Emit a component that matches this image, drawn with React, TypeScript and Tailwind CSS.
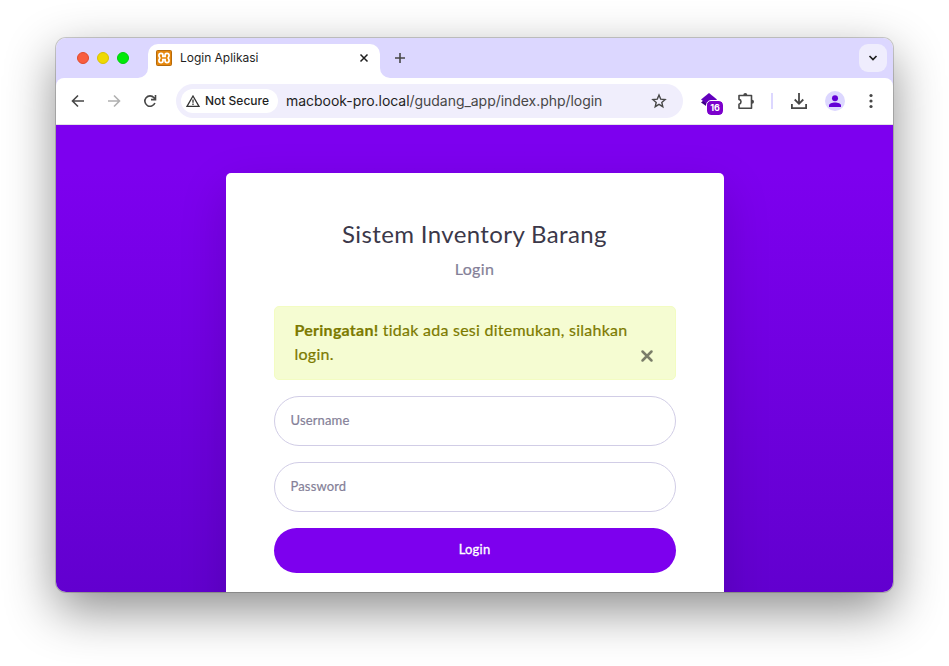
import React from "react";

function TabStrip() {
  return (
    <div className="flex h-10 bg-[#dcd7ff]">
      <div className="flex w-[82px] items-center gap-2 pl-[21px]">
        <span className="size-3 shrink-0 rounded-full border border-[#e04a2c] bg-[#f95d3f]" />
        <span className="size-3 shrink-0 rounded-full border border-[#d8c200] bg-[#efd902]" />
        <span className="size-3 shrink-0 rounded-full border border-[#00cc0c] bg-[#00ea08]" />
      </div>
      <svg className="size-[10px] self-end" viewBox="0 0 10 10">
        <path d="M10 0V10H0A10 10 0 0 0 10 0Z" fill="#fff" />
      </svg>
      <div className="mt-[6px] flex h-[34px] w-[232px] items-center rounded-t-[10px] bg-white pb-[6px] pl-2 pr-[10px]">
        <svg className="size-4" viewBox="0 0 16 16">
          <rect x=".5" y=".5" width="15" height="15" rx="1" fill="#e6860a" stroke="#b56a0c" />
          <path
            d="M6.900 6.300H9.100V4.900C9.100 3.800 9.900 3.300 11 3.300c1.400 0 2.100.8 2.100 2.100 0 1-.4 1.600-1 2.600.6 1 1 1.600 1 2.600 0 1.300-.7 2.100-2.100 2.100-1.100 0-1.900-.5-1.900-1.600V9.700H6.900v1.400c0 1.100-.8 1.600-1.900 1.600-1.400 0-2.100-.8-2.100-2.100 0-1 .4-1.600 1-2.600-.6-1-1-1.600-1-2.600 0-1.300.7-2.100 2.100-2.100 1.100 0 1.900.5 1.900 1.600Z"
            fill="none"
            stroke="#fff"
            strokeWidth="1.700"
          />
        </svg>
        <span className="ml-2 font-['Inter','Liberation_Sans',sans-serif] text-[12px] tracking-[-0.02px] text-[#1f1f1f]">
          Login Aplikasi
        </span>
        <svg className="ml-auto size-3" viewBox="0 0 12 12" stroke="#1f1f1f" strokeWidth="1.500">
          <path d="M2.500 2.500l7 7M9.500 2.500l-7 7" />
        </svg>
      </div>
      <svg className="size-[10px] self-end" viewBox="0 0 10 10">
        <path d="M0 0V10H10A10 10 0 0 1 0 0Z" fill="#fff" />
      </svg>
      <svg className="ml-1 mt-[14px] size-3" viewBox="0 0 12 12" stroke="#474747" strokeWidth="1.600">
        <path d="M6 1v10M1 6h10" />
      </svg>
      <div className="ml-auto mr-[6px] mt-[6px] flex size-7 items-center justify-center rounded-[9px] bg-[#efedfd]">
        <svg className="size-[10px]" viewBox="0 0 10 10" fill="none" stroke="#1f1f1f" strokeWidth="1.700">
          <path d="M1.500 3L5 6.500 8.500 3" />
        </svg>
      </div>
    </div>
  );
}

function Slot({ className, children }: { className: string; children: React.ReactNode }) {
  return <div className={`flex shrink-0 items-center justify-center ${className}`}>{children}</div>;
}

function Toolbar() {
  return (
    <div className="bg-[#dcd7ff]">
      <div className="flex h-[47px] items-center rounded-t-[8px] border-b border-[#e2e1e6] bg-white pl-1">
        <Slot className="w-9">
          <svg className="size-4" viewBox="0 0 16 16" fill="none" stroke="#474747" strokeWidth="1.600">
            <path d="M14 8H3M8 2.500L2.500 8 8 13.500" />
          </svg>
        </Slot>
        <Slot className="w-9">
          <svg className="size-4" viewBox="0 0 16 16" fill="none" stroke="#b0b0b0" strokeWidth="1.600">
            <path d="M2 8h11M8 2.500L13.500 8 8 13.500" />
          </svg>
        </Slot>
        <Slot className="w-9">
          <svg className="size-4" viewBox="0 0 16 16" fill="none" stroke="#474747" strokeWidth="1.600">
            <path d="M12.900 10A5.200 5.200 0 1 1 12 4.700L13.300 6.200M13.500 2v4.600H9" />
          </svg>
        </Slot>
        <div className="ml-2 flex h-[34px] w-[507px] shrink-0 items-center rounded-full bg-[#f0eefc] pl-[5px] pr-4 font-['Inter','Liberation_Sans',sans-serif]">
          <div className="flex h-6 w-[97px] shrink-0 items-center rounded-full bg-white pl-[5px]">
            <svg className="size-[14px]" viewBox="0 0 14 14" fill="none" stroke="#333" strokeWidth="1.300">
              <path d="M7 2L13 12.300H1Z" />
              <path d="M7 5.500v3.300M7 9.600v1.400" />
            </svg>
            <span className="ml-[5px] whitespace-nowrap text-[12px] font-medium text-[#1f1f1f]">Not Secure</span>
          </div>
          <span className="ml-2 whitespace-nowrap pb-[2px] text-[14px] tracking-[-0.04px] text-[#474747]">
            <span className="text-[#1f1f1f]">macbook-pro.local</span>/gudang_app/index.php/login
          </span>
          <svg className="ml-auto size-4" viewBox="0 0 16 16" fill="none" stroke="#474747" strokeWidth="1.400">
            <path d="M8 2l1.700 4.100 4.400.4-3.300 2.900 1 4.300L8 11.400l-3.800 2.300 1-4.300L1.900 6.500l4.400-.4Z" />
          </svg>
        </div>
        <div className="relative ml-[18px] h-[18px] w-[26px] shrink-0">
          <svg className="h-[18px] w-4" viewBox="0 0 16 18">
            <path d="M0 10.500L3 8h10l3 2.500L8 16Z" fill="#3d0085" />
            <path d="M8 1l8 6.500L8 13.500 0 7.500Z" fill="#6200bd" />
          </svg>
          <span className="absolute left-[6px] top-[9px] flex h-[14px] w-4 items-center justify-center rounded-[4px] bg-[#7c00cc] font-['Inter','Liberation_Sans',sans-serif] text-[9px] font-bold text-white outline outline-1 outline-white">
            16
          </span>
        </div>
        <Slot className="w-[38px]">
          <svg className="h-[17px] w-[18px]" viewBox="0 0 18 17" fill="none" stroke="#474747" strokeWidth="1.600">
            <path d="M2 2.500h12.500v12.700H2v-3.900a2.500 2.500 0 0 0 0-4.900Z" strokeLinejoin="round" />
            <path d="M6.300 2.100a2 2 0 0 1 4 0ZM15 6.800a2 2 0 0 1 0 4Z" fill="#474747" stroke="none" />
          </svg>
        </Slot>
        <span className="ml-[6px] h-4 w-[2px] shrink-0 bg-[#dcd7ff]" />
        <Slot className="w-[52px]">
          <svg className="size-4" viewBox="0 0 16 16" fill="none" stroke="#474747" strokeWidth="1.800">
            <path d="M8 0v10.500M3.700 6.500L8 10.800l4.300-4.300M.9 11v4.100h14.200V11" />
          </svg>
        </Slot>
        <Slot className="size-5 rounded-full bg-[#dcd7ff]">
          <svg className="size-3" viewBox="0 0 12 12" fill="#6200d6">
            <circle cx="6" cy="3.200" r="3" />
            <path d="M0 12V10.500C0 8.300 3 7.400 6 7.400s6 .9 6 3.100V12Z" />
          </svg>
        </Slot>
        <Slot className="ml-4 w-5">
          <svg className="size-4" viewBox="0 0 16 16" fill="#474747">
            <circle cx="8" cy="2.500" r="1.600" />
            <circle cx="8" cy="8" r="1.600" />
            <circle cx="8" cy="13.500" r="1.600" />
          </svg>
        </Slot>
      </div>
    </div>
  );
}

function LoginCard() {
  return (
    <div className="h-[600px] w-[498px] shrink-0 rounded-[5px] bg-white px-12 pt-[46px] font-['Lato','Open_Sans',sans-serif] shadow-[0_16px_48px_rgba(0,0,0,0.15)]">
      <h1 className="text-center text-[24px] leading-[29px] tracking-[0.38px] text-[#3b3849]">Sistem Inventory Barang</h1>
      <p className="mt-[9px] text-center text-[16px] leading-6 tracking-[0.3px] text-[#857f98] [-webkit-text-stroke:0.2px]">
        Login
      </p>
      <div className="mt-[25px] flex h-[74px] items-start justify-between rounded-[5px] border border-[#f3fcc2] bg-[#f5fcd2] pl-5 text-[16px] leading-6 text-[#7c7a00]">
        <p className="whitespace-nowrap pt-[11px] tracking-[0.25px] [-webkit-text-stroke:0.2px]">
          <b className="font-bold">Peringatan!</b> tidak ada sesi ditemukan, silahkan
          <br />
          login.
        </p>
        <button className="mr-[21px] mt-[42px] shrink-0" aria-label="Close">
          <svg className="size-[14px]" viewBox="0 0 14 14" stroke="#7a7d69" strokeWidth="2.500" strokeLinecap="round">
            <path d="M2.500 2.500l9 9M11.500 2.500l-9 9" />
          </svg>
        </button>
      </div>
      <input
        className="mt-4 block h-[50px] w-full rounded-full border border-[#d1cde6] bg-white px-4 pb-[3px] text-[13px] tracking-[0.15px] placeholder:text-[#857f98] placeholder:opacity-100 [-webkit-text-stroke:0.2px]"
        placeholder="Username"
      />
      <input
        className="mt-4 block h-[50px] w-full rounded-full border border-[#d1cde6] bg-white px-4 pb-[3px] text-[13px] tracking-[0.15px] placeholder:text-[#857f98] placeholder:opacity-100 [-webkit-text-stroke:0.2px]"
        placeholder="Password"
      />
      <button className="mt-4 block h-[45px] w-full rounded-full bg-[#7d00ee] pb-px text-[13px] tracking-[0.2px] text-white [-webkit-text-stroke:0.3px]">
        Login
      </button>
    </div>
  );
}

export default function App() {
  return (
    <div className="h-[666px] w-[949px] overflow-hidden bg-white px-14 pt-[38px]">
      <div className="h-[554px] w-[837px] rounded-[10px] shadow-[0_0_0_1px_rgba(0,0,0,0.18),0_18px_50px_rgba(0,0,0,0.45)]">
        <div className="h-full overflow-hidden rounded-[10px]">
          <TabStrip />
          <Toolbar />
          <div className="flex h-[467px] items-start justify-center overflow-hidden bg-linear-to-b from-[#7d00ef] from-10% to-[#6200cf] pt-12">
            <LoginCard />
          </div>
        </div>
      </div>
    </div>
  );
}
